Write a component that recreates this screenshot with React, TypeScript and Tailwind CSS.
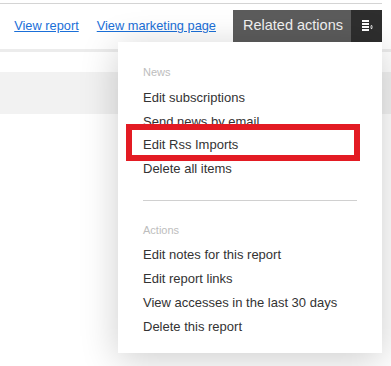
import React from "react";

const newsItems = ["Edit subscriptions", "Send news by email", "Edit Rss Imports", "Delete all items"];
const actionItems = [
  "Edit notes for this report",
  "Edit report links",
  "View accesses in the last 30 days",
  "Delete this report",
];

function MenuIcon() {
  return (
    <svg width="12" height="12" viewBox="0 0 12 12" fill="#ffffff">
      <rect x="0" y="0" width="7" height="2" />
      <rect x="0" y="3" width="7" height="2" />
      <rect x="0" y="6" width="7" height="2" />
      <rect x="0" y="9" width="7" height="2" />
      <polygon points="8,6.6 11,6.6 9.5,5" />
      <polygon points="8,7.6 11,7.6 9.5,9.2" />
    </svg>
  );
}

export default function App() {
  return (
    <div
      className="relative h-[366px] w-[391px] overflow-hidden bg-white"
      style={{ fontFamily: '"Liberation Sans", Arial, sans-serif' }}
    >
      <div className="w-[382px]">
        <div className="h-[3px]" />
        <div className="h-px bg-[#d4d4d4]" />
        <div className="flex h-[38px] items-end justify-end">
          <div className="flex h-[32px] items-center">
            <a className="mr-[18px] text-[12.8px] text-[#1a6fd8] underline">View report</a>
            <a className="mr-[17px] text-[12.8px] text-[#1a6fd8] underline">View marketing page</a>
            <div className="flex h-[32px] w-[118px] items-center bg-[#5c5c5c] pl-[10px] text-[14.5px] text-[#f2f2f2]">
              Related actions
            </div>
            <div className="flex h-[32px] w-[31px] items-center justify-center bg-[#2e2e2e] pl-[2px]">
              <MenuIcon />
            </div>
          </div>
        </div>
      </div>
      <div className="mt-[7px] h-[3px] bg-[#ececec]" />
      <div className="h-[20px]" />
      <div className="h-[42px] bg-[#f2f2f2]" />

      <div className="absolute left-[118px] top-[42px] h-[311px] w-[264px] bg-white px-[25px] pt-[23px] shadow-[0_6px_36px_rgba(0,0,0,0.2)]">
        <div className="text-[11px] leading-[14px] text-[#bdbdbd]">News</div>
        <div className="mt-[7px]">
          {newsItems.map((t) => (
            <div key={t} className="text-[13px] leading-[23.5px] text-[#333333]">
              {t}
            </div>
          ))}
        </div>
        <div className="mt-[20px] h-px bg-[#d0d0d0]" />
        <div className="mt-[22px] text-[11px] leading-[14px] text-[#bdbdbd]">Actions</div>
        <div className="mt-[6px]">
          {actionItems.map((t) => (
            <div key={t} className="text-[13px] leading-[24px] text-[#333333]">
              {t}
            </div>
          ))}
        </div>
        <div className="absolute left-[8px] top-[82px] h-[37px] w-[234px] border-[6px] border-[#e31b23]" />
      </div>
    </div>
  );
}
